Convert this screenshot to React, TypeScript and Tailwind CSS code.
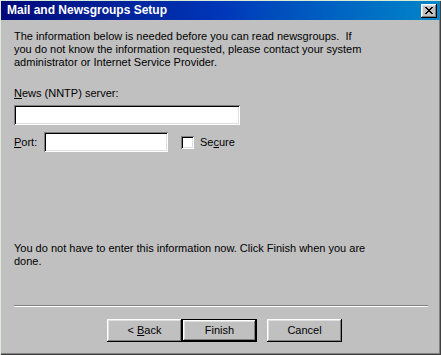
const raised =
  "shadow-[inset_-1px_-1px_#000,inset_1px_1px_#fff,inset_-2px_-2px_#808080,inset_2px_2px_#dfdfdf]";
const sunken =
  "shadow-[inset_1px_1px_#808080,inset_-1px_-1px_#fff,inset_2px_2px_#000,inset_-2px_-2px_#dfdfdf]";

function Button({ children, isDefault }: { children: React.ReactNode; isDefault?: boolean }) {
  if (isDefault) {
    return (
      <div className="border border-black">
        <button className={`flex h-[21px] w-[73px] items-center justify-center bg-[#c0c0c0] ${raised}`}>
          {children}
        </button>
      </div>
    );
  }
  return (
    <button className={`flex h-[23px] w-[75px] items-center justify-center bg-[#c0c0c0] ${raised}`}>
      {children}
    </button>
  );
}

export default function App() {
  return (
    <div
      className="flex h-[355px] w-[441px] flex-col bg-[#c0c0c0] text-[11px] leading-[13px] text-black shadow-[inset_1px_1px_#d8ecd8,inset_-1px_-1px_#404040,inset_-2px_-2px_#808080]"
      style={{ fontFamily: '"Liberation Sans", Arial, sans-serif' }}
    >
      <div className="mx-[1px] mt-[1px] flex h-[19px] items-center justify-between bg-gradient-to-r from-[#00087a] via-[#0036b8] to-[#0a86c8] pl-[6px] pr-[3px]">
        <span className="text-[12px] font-bold text-white">Mail and Newsgroups Setup</span>
        <div className={`flex h-[14px] w-[16px] items-center justify-center bg-[#c0c0c0] ${raised}`}>
          <svg width="8" height="7" viewBox="0 0 8 7" shapeRendering="crispEdges">
            <path d="M0 0h2v1h-2zM6 0h2v1h-2zM1 1h2v1h-2zM5 1h2v1h-2zM2 2h4v1h-4zM3 3h2v1h-2zM2 4h4v1h-4zM1 5h2v1h-2zM5 5h2v1h-2zM0 6h2v1h-2zM6 6h2v1h-2z" fill="#000" />
          </svg>
        </div>
      </div>

      <div className="flex flex-1 flex-col px-[14px] pt-[10px]">
        <p className="whitespace-nowrap">
          The information below is needed before you can read newsgroups.&nbsp; If
          <br />
          you do not know the information requested, please contact your system
          <br />
          administrator or Internet Service Provider.
        </p>

        <p className="mt-[18px]">
          <span className="underline">N</span>ews (NNTP) server:
        </p>
        <div className={`mt-[5px] h-[20px] w-[226px] bg-white ${sunken}`} />

        <div className="mt-[7px] flex h-[20px] items-center">
          <span className="w-[30px]">
            <span className="underline">P</span>ort:
          </span>
          <div className={`h-[20px] w-[124px] bg-white ${sunken}`} />
          <div className={`ml-[13px] h-[13px] w-[13px] bg-white ${sunken}`} />
          <span className="ml-[6px]">
            Se<span className="underline">c</span>ure
          </span>
        </div>

        <p className="mt-[90px] whitespace-nowrap">
          You do not have to enter this information now. Click Finish when you are
          <br />
          done.
        </p>

        <div className="mt-[37px] h-[2px] w-[414px] border-t border-t-[#808080] border-b border-b-white" />

        <div className="mt-[12px] flex pl-[93px]">
          <Button>
            &lt; <span className="ml-[3px] underline">B</span>ack
          </Button>
          <Button isDefault>Finish</Button>
          <div className="ml-[10px]">
            <Button>Cancel</Button>
          </div>
        </div>
      </div>
    </div>
  );
}
